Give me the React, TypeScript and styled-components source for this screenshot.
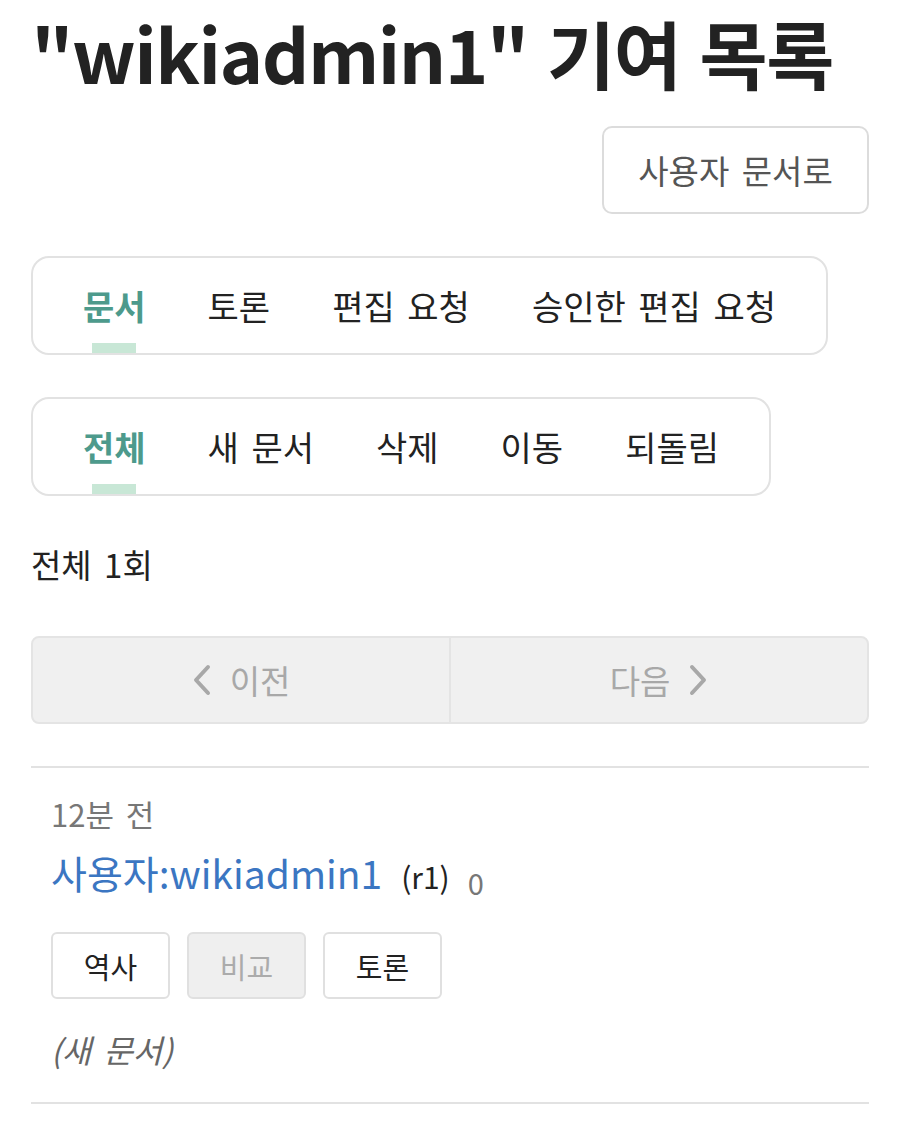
import { FC } from "react";
import styled, { createGlobalStyle, css } from "styled-components";

const GlobalStyle = createGlobalStyle`
  html, body {
    margin: 0;
    padding: 0;
    background: #fff;
  }
  body {
    font-family: "Noto Sans CJK KR", "Noto Sans", sans-serif;
    color: #222;
    word-spacing: 5px;
  }
`;

const mainTabs = ["문서", "토론", "편집 요청", "승인한 편집 요청"];
const subTabs = ["전체", "새 문서", "삭제", "이동", "되돌림"];

const App: FC = () => {
  return (
    <>
      <GlobalStyle />
      <Page>
        <Title>"wikiadmin1" 기여 목록</Title>
        <ToolRow>
          <OutlineButton>사용자 문서로</OutlineButton>
        </ToolRow>

        <TabBox>
          {mainTabs.map((t, i) => (
            <Tab key={t} active={i === 0}>
              {t}
            </Tab>
          ))}
        </TabBox>

        <TabBox>
          {subTabs.map((t, i) => (
            <Tab key={t} active={i === 0}>
              {t}
            </Tab>
          ))}
        </TabBox>

        <Count>전체 1회</Count>

        <Pager>
          <PageButton>
            <Chevron viewBox="0 0 20 32">
              <path d="M16 3 L4 16 L16 29" />
            </Chevron>
            이전
          </PageButton>
          <PageButton>
            다음
            <Chevron viewBox="0 0 20 32">
              <path d="M4 3 L16 16 L4 29" />
            </Chevron>
          </PageButton>
        </Pager>

        <List>
          <Item>
            <Time>12분 전</Time>
            <TitleLine>
              <DocLink href="#">사용자:wikiadmin1</DocLink>
              <Rev>(r1)</Rev>
              <Diff>0</Diff>
            </TitleLine>
            <Actions>
              <SmallButton>역사</SmallButton>
              <SmallButton disabled>비교</SmallButton>
              <SmallButton>토론</SmallButton>
            </Actions>
            <Note>(새 문서)</Note>
          </Item>
        </List>
      </Page>
    </>
  );
};

export default App;

interface ActiveProps {
  active?: boolean;
}

interface DisabledProps {
  disabled?: boolean;
}

const Page = styled.div`
  padding: 0 31px 24px;
`;

const Title = styled.h1`
  margin: 0;
  padding-top: 1px;
  font-size: 74px;
  font-weight: 700;
  line-height: 102px;
  color: #222;
  letter-spacing: -1.5px;
  word-spacing: 4px;
`;

const ToolRow = styled.div`
  display: flex;
  justify-content: flex-end;
  margin-top: 23px;
`;

const OutlineButton = styled.div`
  display: flex;
  align-items: center;
  justify-content: center;
  width: 267px;
  height: 88px;
  box-sizing: border-box;
  border: 2px solid #dcdcdc;
  border-radius: 10px;
  font-size: 33px;
  color: #555;
`;

const TabBox = styled.div`
  display: inline-flex;
  align-items: stretch;
  margin-top: 42px;
  padding: 0 19px;
  border: 2px solid #e2e2e2;
  border-radius: 18px;
  height: 99px;
  box-sizing: border-box;
  & + & {
    margin-top: 42px;
  }
`;

const Tab = styled.div<ActiveProps>`
  position: relative;
  display: flex;
  align-items: center;
  padding: 0 31px;
  font-size: 34px;
  color: #222;
  white-space: nowrap;
  ${(p) =>
    p.active &&
    css`
      color: #4d9a8c;
      font-weight: 700;
      &::after {
        content: "";
        position: absolute;
        left: 50%;
        bottom: 0;
        width: 44px;
        height: 10px;
        margin-left: -22px;
        background: #c8e7d6;
      }
    `}
`;

const Count = styled.div`
  margin-top: 46px;
  font-size: 33px;
  line-height: 44px;
  color: #222;
`;

const Pager = styled.div`
  display: flex;
  margin-top: 50px;
  height: 88px;
  box-sizing: border-box;
  border: 2px solid #e4e4e4;
  border-radius: 8px;
  background: #f0f0f0;
  overflow: hidden;
`;

const PageButton = styled.div`
  flex: 1;
  display: flex;
  align-items: center;
  justify-content: center;
  gap: 18px;
  font-size: 33px;
  color: #a8a8a8;
  & + & {
    border-left: 2px solid #e4e4e4;
  }
`;

const Chevron = styled.svg`
  width: 20px;
  height: 32px;
  fill: none;
  stroke: #a8a8a8;
  stroke-width: 4;
  stroke-linecap: round;
  stroke-linejoin: round;
`;

const List = styled.div`
  margin-top: 42px;
  border-top: 2px solid #e2e2e2;
`;

const Item = styled.div`
  padding: 24px 20px 31px;
  border-bottom: 2px solid #e2e2e2;
`;

const Time = styled.div`
  font-size: 31px;
  line-height: 44px;
  color: #777;
`;

const TitleLine = styled.div`
  display: flex;
  align-items: baseline;
  margin-top: 8px;
`;

const DocLink = styled.a`
  font-size: 39px;
  line-height: 56px;
  color: #3b76c2;
  text-decoration: none;
`;

const Rev = styled.span`
  margin-left: 19px;
  font-size: 30px;
  color: #222;
`;

const Diff = styled.span`
  margin-left: 18px;
  font-size: 29px;
  color: #777;
  position: relative;
  top: 6px;
`;

const Actions = styled.div`
  display: flex;
  gap: 17px;
  margin-top: 32px;
`;

const SmallButton = styled.div<DisabledProps>`
  display: flex;
  align-items: center;
  justify-content: center;
  width: 119px;
  height: 67px;
  box-sizing: border-box;
  border: 2px solid #e0e0e0;
  border-radius: 6px;
  font-size: 29px;
  color: #222;
  background: #fff;
  ${(p) =>
    p.disabled &&
    css`
      background: #efefef;
      color: #ababab;
    `}
`;

const Note = styled.div`
  margin-top: 28px;
  font-size: 32px;
  line-height: 44px;
  font-style: italic;
  color: #666;
`;
